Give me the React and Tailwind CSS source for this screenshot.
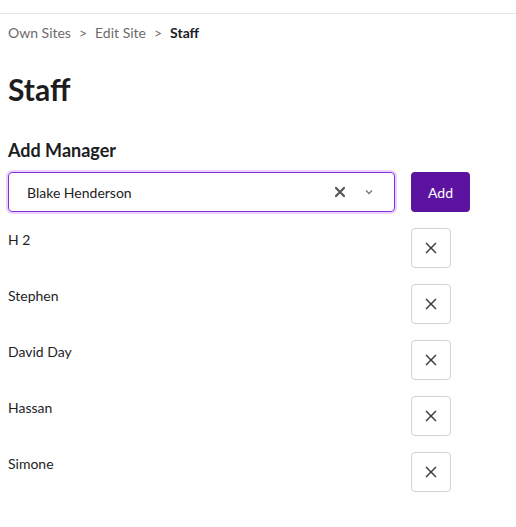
import React from "react";

const staff = ["H 2", "Stephen", "David Day", "Hassan", "Simone"];

export default function App() {
  return (
    <div className="min-h-screen bg-white text-[#1d1d1f]" style={{ fontFamily: '"Lato", "Noto Sans", sans-serif' }}>
      <div className="h-[14px] border-b border-[#e5e5e5]" />
      <div className="px-2">
        {/* Breadcrumb */}
        <div className="mt-[8px] flex items-center gap-[8px] text-[14px] text-[#6b6b6b]">
          <span>Own Sites</span>
          <span>&gt;</span>
          <span>Edit Site</span>
          <span>&gt;</span>
          <span className="font-bold text-[#1d1d1f]">Staff</span>
        </div>

        <h1 className="mt-[26px] text-[30px] font-bold leading-[40px]">Staff</h1>

        <h2 className="mt-[29px] text-[18px] font-bold leading-[24px]">Add Manager</h2>

        <div className="mt-[10px] flex items-center">
          <div className="flex h-[40px] w-[387px] items-center rounded-[4px] border border-[#8a2be2] pl-[18px] pr-[20px] shadow-[0_0_0_2px_#e6d6fb]">
            <span className="flex-1 text-[14px] text-[#222]">Blake Henderson</span>
            <svg width="12" height="12" viewBox="0 0 12 12" className="mr-[18px]">
              <path d="M2 2L10 10M10 2L2 10" stroke="#555" strokeWidth="2.2" strokeLinecap="round" />
            </svg>
            <svg width="10" height="10" viewBox="0 0 10 10">
              <path d="M2 3.5L5 6.5L8 3.5" stroke="#777" strokeWidth="1.3" fill="none" />
            </svg>
          </div>
          <button className="ml-[16px] h-[40px] w-[59px] rounded-[4px] bg-[#5c139f] text-[14px] text-white">
            Add
          </button>
        </div>

        <div className="mt-[16px] flex flex-col gap-[16px]">
          {staff.map((name) => (
            <div key={name} className="flex w-[443px] items-start justify-between">
              <span className="text-[14px] leading-[24px] text-[#1d1d1f]">{name}</span>
              <button className="flex h-[40px] w-[40px] items-center justify-center rounded-[4px] border border-[#d4d4d4] bg-white">
                <svg width="12" height="12" viewBox="0 0 12 12">
                  <path d="M1 1L11 11M11 1L1 11" stroke="#333" strokeWidth="1.4" />
                </svg>
              </button>
            </div>
          ))}
        </div>
      </div>
    </div>
  );
}
